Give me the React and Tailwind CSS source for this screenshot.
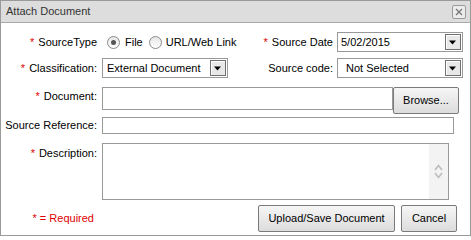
import React from "react";

const Star = () => <span className="text-[#e00000] mr-[4px]">*</span>;

const Arrow = () => (
  <div className="w-[16px] h-[16px] mr-[1px] border border-[#707070] bg-[#e8e8e8] flex items-center justify-center shadow-[inset_1px_1px_0_#fff]">
    <svg width="8" height="5" viewBox="0 0 8 5">
      <path d="M0 0.5 H7 L3.5 4.5 Z" fill="#000" />
    </svg>
  </div>
);

const Radio = ({ checked }) => (
  <div className="w-[13px] h-[13px] rounded-full border border-[#8a8a8a] bg-gradient-to-b from-[#e6e6e6] to-[#ffffff] flex items-center justify-center">
    {checked && <div className="w-[5px] h-[5px] rounded-full bg-[#555]" />}
  </div>
);

const Btn = ({ children, className = "" }) => (
  <div
    className={
      "h-[27px] flex items-center justify-center border border-[#7a7a7a] rounded-[2px] bg-gradient-to-b from-[#f6f6f6] to-[#dcdcdc] text-black " +
      className
    }
  >
    {children}
  </div>
);

export default function App() {
  return (
    <div
      className="w-[471px] h-[236px] border border-[#9a9a9a] bg-white text-[11px] leading-[13px] text-black flex flex-col"
      style={{ fontFamily: '"Liberation Sans", Arial, sans-serif' }}
    >
      {/* Title bar */}
      <div className="h-[22px] shrink-0 bg-[#dddddd] border-b border-[#aaaaaa] flex items-center justify-between pl-[5px] pr-[4px]">
        <span className="text-[#333]">Attach Document</span>
        <div className="w-[14px] h-[14px] border border-[#9a9a9a] rounded-[2px] bg-[#ececec] flex items-center justify-center">
          <svg width="8" height="8" viewBox="0 0 8 8">
            <path d="M1 1 L7 7 M7 1 L1 7" stroke="#777" strokeWidth="1.3" />
          </svg>
        </div>
      </div>

      {/* Row 1 */}
      <div className="mt-[9px] h-[20px] flex items-center">
        <div className="w-[96px] text-right">
          <Star />SourceType
        </div>
        <div className="ml-[10px] flex items-center">
          <Radio checked />
          <span className="ml-[5px]">File</span>
          <div className="ml-[6px]"><Radio /></div>
          <span className="ml-[4px]">URL/Web Link</span>
        </div>
        <div className="ml-auto flex items-center pr-[7px]">
          <span><Star />Source Date</span>
          <div className="ml-[4px] w-[126px] h-[20px] border border-[#999] flex items-center justify-between">
            <span className="pl-[3px]">5/02/2015</span>
            <Arrow />
          </div>
        </div>
      </div>

      {/* Row 2 */}
      <div className="mt-[6px] h-[20px] flex items-center">
        <div className="w-[96px] text-right">
          <Star />Classification:
        </div>
        <div className="ml-[5px] w-[126px] h-[20px] border border-[#999] flex items-center justify-between">
          <span className="pl-[4px]">External Document</span>
          <Arrow />
        </div>
        <div className="ml-auto flex items-center pr-[7px]">
          <span>Source code:</span>
          <div className="ml-[4px] w-[126px] h-[20px] border border-[#999] flex items-center justify-between">
            <span className="pl-[8px]">Not Selected</span>
            <Arrow />
          </div>
        </div>
      </div>

      {/* Row 3 */}
      <div className="mt-[9px] h-[23px] flex">
        <div className="w-[96px] text-right pt-[3px]">
          <Star />Document:
        </div>
        <div className="ml-[5px] w-[291px] h-[23px] border border-[#999]" />
        <Btn className="w-[66px] h-[23px]">Browse...</Btn>
      </div>

      {/* Row 4 */}
      <div className="mt-[7px] h-[17px] flex items-center">
        <div className="w-[96px] text-right whitespace-nowrap">Source Reference:</div>
        <div className="ml-[5px] w-[352px] h-[17px] border border-[#999]" />
      </div>

      {/* Row 5 */}
      <div className="mt-[9px] h-[57px] flex">
        <div className="w-[96px] text-right pt-[4px]">
          <Star />Description:
        </div>
        <div className="ml-[5px] w-[347px] h-[57px] border border-[#999] flex justify-end">
          <div className="w-[19px] h-full bg-[#f3f3f3] flex items-center justify-center">
            <svg width="9" height="15" viewBox="0 0 9 15">
              <path d="M1 6 L4.5 1.5 L8 6 M1 9 L4.5 13.5 L8 9" stroke="#bdbdbd" strokeWidth="1.6" fill="none" />
            </svg>
          </div>
        </div>
      </div>

      {/* Row 6 */}
      <div className="mt-[5px] flex items-center">
        <div className="w-[93px] text-right text-[#e00000]">* = Required</div>
        <div className="ml-auto flex pr-[13px]">
          <Btn className="w-[137px]">Upload/Save Document</Btn>
          <Btn className="ml-[6px] w-[56px]">Cancel</Btn>
        </div>
      </div>
    </div>
  );
}
